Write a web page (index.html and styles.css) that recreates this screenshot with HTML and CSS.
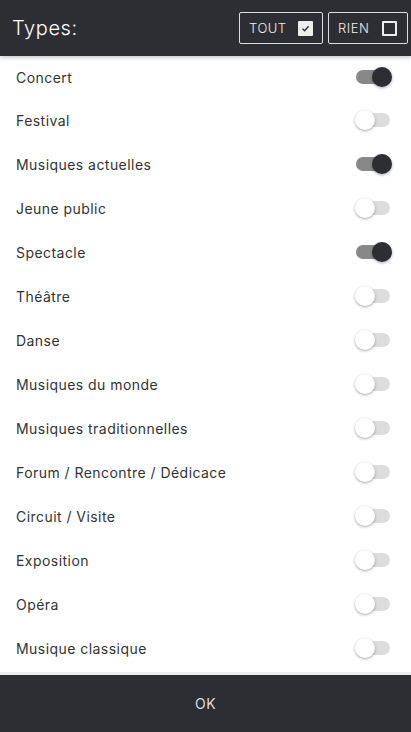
FILE: index.html
```html
<!DOCTYPE html>
<html lang="fr">
<head>
    <meta charset="UTF-8">
    <meta name="viewport" content="width=device-width, initial-scale=1.0">
    <title>Types</title>
    <link rel="stylesheet" href="styles.css">
</head>
<body>
    <header class="topbar">
        <h1>Types:</h1>
        <div class="actions">
            <button class="pick">TOUT
                <span class="box checked">
                    <svg width="9" height="9" viewBox="0 0 9 9"><path d="M1.5 4.8 L3.6 6.8 L7.6 2.2" fill="none" stroke="#2d2e33" stroke-width="1.4"/></svg>
                </span>
            </button>
            <button class="pick">RIEN <span class="box"></span></button>
        </div>
    </header>

    <ul class="types">
        <li><span>Concert</span><span class="toggle on"></span></li>
        <li><span>Festival</span><span class="toggle"></span></li>
        <li><span>Musiques actuelles</span><span class="toggle on"></span></li>
        <li><span>Jeune public</span><span class="toggle"></span></li>
        <li><span>Spectacle</span><span class="toggle on"></span></li>
        <li><span>Théâtre</span><span class="toggle"></span></li>
        <li><span>Danse</span><span class="toggle"></span></li>
        <li><span>Musiques du monde</span><span class="toggle"></span></li>
        <li><span>Musiques traditionnelles</span><span class="toggle"></span></li>
        <li><span>Forum / Rencontre / Dédicace</span><span class="toggle"></span></li>
        <li><span>Circuit / Visite</span><span class="toggle"></span></li>
        <li><span>Exposition</span><span class="toggle"></span></li>
        <li><span>Opéra</span><span class="toggle"></span></li>
        <li><span>Musique classique</span><span class="toggle"></span></li>
    </ul>

    <footer class="bottombar">OK</footer>
</body>
</html>
```

FILE: styles.css
```css
body {
    margin: 0;
    font-family: Inter, "Noto Sans", sans-serif;
    background: #fff;
    color: #333;
    width: 411px;
    height: 732px;
    display: flex;
    flex-direction: column;
    overflow: hidden;
}

.topbar {
    height: 56px;
    background: #2d2e33;
    color: #fff;
    display: flex;
    align-items: center;
    justify-content: space-between;
    padding: 0 3px 0 12px;
    box-shadow: 0 2px 4px rgba(0, 0, 0, 0.2);
    position: relative;
    z-index: 1;
}

.topbar h1 {
    margin: 0;
    font-size: 20px;
    font-weight: 300;
    letter-spacing: 0.6px;
}

.actions {
    display: flex;
    gap: 5px;
}

.pick {
    height: 32px;
    background: transparent;
    border: 1px solid #ddd;
    border-radius: 2px;
    color: #eee;
    font-family: inherit;
    font-size: 13px;
    font-weight: 300;
    letter-spacing: 0.5px;
    padding: 0 9px 0 9px;
    display: flex;
    align-items: center;
    justify-content: space-between;
}

.pick:first-child {
    width: 84px;
}

.pick:last-child {
    width: 80px;
    padding-right: 10px;
}

.box {
    width: 11px;
    height: 11px;
    border: 2px solid #eee;
    border-radius: 1px;
    display: flex;
    align-items: center;
    justify-content: center;
}

.box.checked {
    background: #eee;
}

.types {
    list-style: none;
    margin: 0;
    padding: 0;
    flex: 1;
}

.types li {
    height: 44px;
    display: flex;
    align-items: center;
    justify-content: space-between;
    padding: 0 21px 0 16px;
    font-size: 14px;
    letter-spacing: 0.45px;
    color: #333;
}

.types li:first-child {
    height: 42px;
}

.toggle {
    width: 34px;
    height: 14px;
    border-radius: 7px;
    background: #ddd;
    position: relative;
}

.toggle::after {
    content: "";
    position: absolute;
    top: -3px;
    left: -1px;
    width: 20px;
    height: 20px;
    border-radius: 50%;
    background: #fff;
    box-shadow: 0 1px 3px rgba(0, 0, 0, 0.35);
}

.toggle.on {
    background: #888;
}

.toggle.on::after {
    left: 16px;
    background: #2d2e33;
}

.bottombar {
    height: 57px;
    background: #2d2e33;
    color: #ddd;
    display: flex;
    align-items: center;
    justify-content: center;
    font-size: 14px;
    letter-spacing: 0.5px;
    border-top: 3px solid #eee;
}
```
